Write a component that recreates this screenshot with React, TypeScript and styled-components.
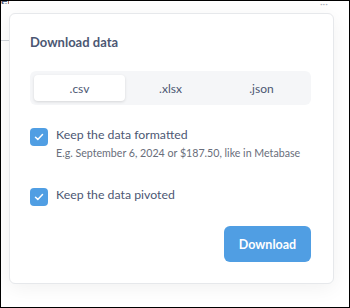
import React, { useState } from "react";
import styled, { createGlobalStyle } from "styled-components";

const Global = createGlobalStyle`
  html, body { margin: 0; padding: 0; background: #fff; }
  * { box-sizing: border-box; }
  body { font-family: Lato, "Noto Sans", sans-serif; }
`;

const Frame = styled.div`
  position: relative;
  width: 350px;
  height: 308px;
  border: 1px solid #000;
  background: #fff;
  overflow: hidden;
`;

const PageBehind = styled.div`
  display: flex;
  flex-direction: column;
  width: 8px;
  height: 100%;
  background: #fff;
`;

const CutText = styled.div`
  font-size: 12px;
  line-height: 6px;
  height: 6px;
  overflow: hidden;
  color: #4c5773;
  font-weight: 700;
  margin-top: -3px;
`;

const CutLine = styled.div`
  margin-top: 36px;
  height: 1px;
  background: #cfd4da;
`;

const Dots = styled.div`
  position: absolute;
  top: -4px;
  left: 319px;
  font-size: 10px;
  color: #b0b5bd;
`;

const Popover = styled.div`
  position: absolute;
  left: 8px;
  top: 12px;
  width: 325px;
  height: 271px;
  background: #fff;
  border: 1px solid #e6e8eb;
  border-radius: 6px;
  box-shadow: 0 4px 20px rgba(0, 0, 0, 0.06);
  padding: 19px 22px 21px 20px;
  display: flex;
  flex-direction: column;
`;

const Title = styled.h2`
  margin: 0;
  font-size: 13px;
  line-height: 18px;
  font-weight: 700;
  color: #4c5773;
`;

const Segmented = styled.div`
  margin-top: 20px;
  display: grid;
  grid-template-columns: repeat(3, 1fr);
  padding: 4px;
  background: #f5f6f8;
  border-radius: 6px;
  height: 34px;
`;

const Tab = styled.button<{ $active?: boolean }>`
  border: none;
  font-family: Lato, "Noto Sans", sans-serif;
  font-size: 12px;
  color: #4c5773;
  border-radius: 4px;
  background: ${(p) => (p.$active ? "#fff" : "transparent")};
  box-shadow: ${(p) => (p.$active ? "0 1px 3px rgba(0,0,0,0.13)" : "none")};
  padding: 0;
  cursor: pointer;
`;

const Options = styled.div`
  margin-top: 23px;
  display: flex;
  flex-direction: column;
  gap: 28px;
`;

const Option = styled.label`
  display: flex;
  align-items: flex-start;
  gap: 8px;
`;

const Box = styled.span`
  flex: none;
  width: 18px;
  height: 18px;
  border-radius: 4px;
  background: #509ee3;
  display: flex;
  align-items: center;
  justify-content: center;
`;

const TextCol = styled.div`
  display: flex;
  flex-direction: column;
`;

const Label = styled.span`
  font-size: 12.3px;
  line-height: 14px;
  color: #4c5773;
`;

const Hint = styled.span`
  margin-top: 4px;
  font-size: 10.65px;
  line-height: 14px;
  color: #696e7b;
`;

const Footer = styled.div`
  margin-top: auto;
  display: flex;
  justify-content: flex-end;
`;

const Button = styled.button`
  width: 87px;
  height: 36px;
  border: none;
  border-radius: 6px;
  background: #509ee3;
  color: #fff;
  font-family: Lato, "Noto Sans", sans-serif;
  font-size: 12.5px;
  font-weight: 700;
  cursor: pointer;
`;

const Check = () => (
  <svg width="10" height="8" viewBox="0 0 10 8" fill="none">
    <path d="M1.5 4.2 L3.8 6.4 L8.5 1.6" stroke="#fff" strokeWidth="1.5" strokeLinecap="round" strokeLinejoin="round" />
  </svg>
);

export default function App() {
  const [tab, setTab] = useState(0);
  const tabs = [".csv", ".xlsx", ".json"];
  return (
    <>
      <Global />
      <Frame>
        <PageBehind>
          <CutText>el</CutText>
          <CutLine />
        </PageBehind>
        <Dots>···</Dots>
        <Popover>
          <Title>Download data</Title>
          <Segmented>
            {tabs.map((t, i) => (
              <Tab key={t} $active={i === tab} onClick={() => setTab(i)}>
                {t}
              </Tab>
            ))}
          </Segmented>
          <Options>
            <Option>
              <Box><Check /></Box>
              <TextCol>
                <Label>Keep the data formatted</Label>
                <Hint>E.g. September 6, 2024 or $187.50, like in Metabase</Hint>
              </TextCol>
            </Option>
            <Option>
              <Box><Check /></Box>
              <TextCol>
                <Label>Keep the data pivoted</Label>
              </TextCol>
            </Option>
          </Options>
          <Footer>
            <Button>Download</Button>
          </Footer>
        </Popover>
      </Frame>
    </>
  );
}
